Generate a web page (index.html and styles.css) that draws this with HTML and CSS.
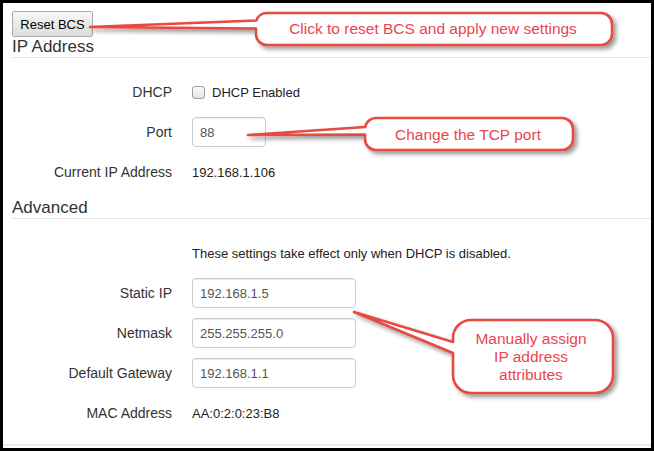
FILE: index.html
```html
<!DOCTYPE html>
<html lang="en">
<head>
<meta charset="utf-8">
<title>BCS Network Settings</title>
<link rel="stylesheet" href="styles.css">
</head>
<body>
<div class="frame">
  <div class="content">
    <button class="btn" type="button">Reset BCS</button>
    <h3 class="section-title">IP Address</h3>
    <div class="row">
      <label class="label">DHCP</label>
      <div class="value check"><span class="checkbox"></span><span>DHCP Enabled</span></div>
    </div>
    <div class="row">
      <label class="label">Port</label>
      <div class="value"><input class="field field-short" type="text" value="88"></div>
    </div>
    <div class="row">
      <label class="label">Current IP Address</label>
      <div class="value">192.168.1.106</div>
    </div>
    <h3 class="section-title section-gap">Advanced</h3>
    <div class="row">
      <span class="label"></span>
      <div class="value">These settings take effect only when DHCP is disabled.</div>
    </div>
    <div class="row">
      <label class="label">Static IP</label>
      <div class="value"><input class="field" type="text" value="192.168.1.5"></div>
    </div>
    <div class="row">
      <label class="label">Netmask</label>
      <div class="value"><input class="field" type="text" value="255.255.255.0"></div>
    </div>
    <div class="row">
      <label class="label">Default Gateway</label>
      <div class="value"><input class="field" type="text" value="192.168.1.1"></div>
    </div>
    <div class="row">
      <label class="label">MAC Address</label>
      <div class="value">AA:0:2:0:23:B8</div>
    </div>
  </div>
  <div class="footer-line"></div>
</div>

<svg class="callouts" width="654" height="451" viewBox="0 0 654 451" xmlns="http://www.w3.org/2000/svg">
  <defs>
    <filter id="shadow" x="-10%" y="-30%" width="130%" height="170%">
      <feDropShadow dx="3" dy="3" stdDeviation="2.2" flood-color="#000" flood-opacity="0.4"/>
    </filter>
  </defs>
  <g class="bubble" filter="url(#shadow)">
    <path d="M267,13 H601 A11 11 0 0 1 612,24 V34 A11 11 0 0 1 601,45 H267 A11 11 0 0 1 256,34 V28.5 L90,27 L256.3,20.5 A11 11 0 0 1 267,13 Z"/>
    <path d="M376,118 H562 A11 11 0 0 1 573,129 V139 A11 11 0 0 1 562,150 H376 A11 11 0 0 1 365,139 V134.5 L248,135 L365.2,127 A11 11 0 0 1 376,118 Z"/>
    <path d="M471,320 H595 A18 18 0 0 1 613,338 V375 A18 18 0 0 1 595,393 H471 A18 18 0 0 1 453,375 V353 L354,312 L453,342 V338 A18 18 0 0 1 471,320 Z"/>
  </g>
  <g class="bubble-text">
    <text x="433" y="33.5">Click to reset BCS and apply new settings</text>
    <text x="468" y="139.5">Change the TCP port</text>
    <text x="531" y="344">Manually assign</text>
    <text x="531" y="362">IP address</text>
    <text x="531" y="380">attributes</text>
  </g>
</svg>
</body>
</html>
```

FILE: styles.css
```css
html, body {
  margin: 0;
  padding: 0;
}

body {
  background: #000;
  position: relative;
  width: 654px;
  height: 451px;
  overflow: hidden;
  font-family: "Liberation Sans", Arial, sans-serif;
  font-size: 14px;
  color: #333;
}

.frame {
  margin: 3px;
  width: 648px;
  height: 445px;
  background: #fff;
  display: flex;
  flex-direction: column;
}

.content {
  padding: 8px 0 0 9px;
  flex: 1;
}

.btn {
  display: block;
  box-sizing: border-box;
  width: 81px;
  height: 26px;
  margin: 0;
  padding: 0;
  border: 1px solid #adadad;
  border-radius: 2px;
  background: linear-gradient(#f7f7f7, #dddddd);
  font-family: "Liberation Sans", Arial, sans-serif;
  font-size: 13px;
  color: #000;
}

.section-title {
  margin: 0 0 19px;
  font-size: 17px;
  line-height: 20px;
  font-weight: normal;
  color: #333;
  border-bottom: 1px solid #e5e5e5;
}

.section-gap {
  margin-top: 11px;
}

.row {
  display: grid;
  grid-template-columns: 160px 1fr;
  column-gap: 20px;
  height: 30px;
  align-items: center;
  margin-bottom: 10px;
}

.label {
  text-align: right;
  color: #333;
}

.value {
  color: #222;
  font-size: 13px;
}

.check {
  display: flex;
  align-items: center;
  gap: 7px;
}

.checkbox {
  display: block;
  box-sizing: border-box;
  width: 13px;
  height: 13px;
  border: 1px solid #9e9e9e;
  border-radius: 3px;
  background: linear-gradient(#fcfcfc, #e2e2e2);
  margin-top: 1px;
}

.field {
  display: block;
  box-sizing: border-box;
  width: 164px;
  height: 30px;
  margin: 0;
  padding: 0 7px;
  border: 1px solid #ccc;
  border-radius: 4px;
  box-shadow: inset 0 1px 1px rgba(0, 0, 0, 0.075);
  font-family: "Liberation Sans", Arial, sans-serif;
  font-size: 13px;
  color: #555;
  background: #fff;
}

.field-short {
  width: 74px;
}

.footer-line {
  height: 2px;
  background: #ececec;
  margin-bottom: 2px;
}

.callouts {
  position: absolute;
  top: 0;
  left: 0;
  pointer-events: none;
}

.bubble path {
  fill: #fff;
  stroke: #e8483f;
  stroke-width: 2.6;
  stroke-linejoin: round;
}

.bubble-text text {
  font-family: "Liberation Sans", Arial, sans-serif;
  font-size: 15.5px;
  fill: #e9454f;
  text-anchor: middle;
}
```
